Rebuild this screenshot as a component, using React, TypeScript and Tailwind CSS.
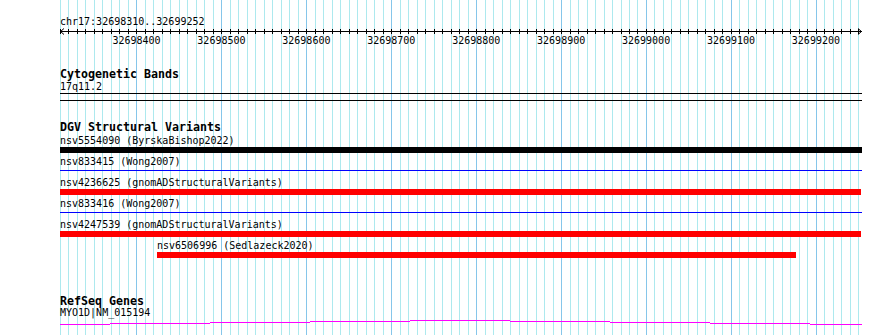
import React from 'react';

const START = 32698310;
const END = 32699252;
const LEFT = 60;
const SPAN = 800;
const toX = (p: number) => LEFT + ((p - START) * SPAN) / (END - START);

const minor = Array.from({ length: 95 }, (_, i) => START + i * 10);
const major = minor.filter((p) => p % 100 === 0);

type Feature = {
  id: string;
  source: string;
  start: number;
  end: number;
  kind: 'black' | 'red' | 'blue';
};

const variants: Feature[] = [
  { id: 'nsv5554090', source: 'ByrskaBishop2022', start: 60, end: 862, kind: 'black' },
  { id: 'nsv833415', source: 'Wong2007', start: 60, end: 862, kind: 'blue' },
  { id: 'nsv4236625', source: 'gnomADStructuralVariants', start: 60, end: 861, kind: 'red' },
  { id: 'nsv833416', source: 'Wong2007', start: 60, end: 862, kind: 'blue' },
  { id: 'nsv4247539', source: 'gnomADStructuralVariants', start: 60, end: 861, kind: 'red' },
  { id: 'nsv6506996', source: 'Sedlazeck2020', start: 157, end: 796, kind: 'red' },
];

// gene connector steps (global x, global y)
const geneSteps: [number, number, number][] = [
  [60, 110, 324],
  [110, 210, 323],
  [210, 310, 322],
  [310, 410, 321],
  [410, 510, 320],
  [510, 610, 321],
  [610, 710, 322],
  [710, 810, 323],
  [810, 862, 324],
];

function Grid() {
  return (
    <svg className="absolute inset-0" width={890} height={335} shapeRendering="crispEdges">
      {minor.map((p) => {
        const x = Math.round(toX(p)) + 0.5;
        const isMajor = p % 100 === 0;
        return (
          <line
            key={p}
            x1={x}
            x2={x}
            y1={0}
            y2={335}
            stroke={isMajor ? '#86c6ea' : '#ade9ee'}
            strokeWidth={1}
          />
        );
      })}
    </svg>
  );
}

function Ruler() {
  return (
    <svg width={804} height={8} shapeRendering="crispEdges" className="block">
      <line x1={0} x2={802} y1={4.5} y2={4.5} stroke="#000" />
      {minor.map((p) => {
        const x = Math.round(toX(p)) - LEFT + 0.5;
        return <line key={p} x1={x} x2={x} y1={2} y2={7} stroke="#000" />;
      })}
      <polyline points="4,1.5 0.5,4.5 4,7.5" fill="none" stroke="#000" shapeRendering="auto" />
      <polyline points="798,1.5 801.5,4.5 798,7.5" fill="none" stroke="#000" shapeRendering="auto" />
    </svg>
  );
}

function TrackTitle({ children }: { children: React.ReactNode }) {
  return <div className="h-[12px] text-[11.63px] leading-[12px] font-bold whitespace-nowrap">{children}</div>;
}

function VariantRow({ f }: { f: Feature }) {
  const offset = f.start - LEFT;
  const width = f.end - f.start;
  return (
    <div className="flex flex-col pb-[3px]">
      <div className="h-[11px] text-[10px] leading-[11px] whitespace-nowrap" style={{ marginLeft: offset }}>
        {f.id} ({f.source})
      </div>
      <div className="mt-[1px] h-[6px] relative" style={{ marginLeft: offset, width }}>
        {f.kind === 'blue' ? (
          <div className="mt-[2px] h-px bg-[#0000ff]" />
        ) : (
          <div className={f.kind === 'red' ? 'h-[6px] bg-[#ff0000]' : 'h-[6px] bg-black'} />
        )}
      </div>
    </div>
  );
}

export default function App() {
  return (
    <div className="relative w-[890px] h-[335px] overflow-hidden bg-white text-black font-['DejaVu_Sans_Mono',monospace]">
      <Grid />

      <div className="relative flex flex-col pl-[60px]">
        {/* Ruler */}
        <div className="pt-[16px] h-[27px] text-[10px] leading-[11px] whitespace-nowrap">chr17:32698310..32699252</div>
        <Ruler />
        <div className="relative h-[11px] text-[10px] leading-[11px]">
          {major.map((p) => (
            <span
              key={p}
              className="absolute top-0 w-[48px] text-center"
              style={{ left: toX(p) - LEFT - 24 }}
            >
              {p}
            </span>
          ))}
        </div>

        {/* Cytogenetic Bands */}
        <div className="mt-[22px]">
          <TrackTitle>Cytogenetic Bands</TrackTitle>
        </div>
        <div className="mt-[1px] h-[11px] text-[10px] leading-[11px]">17q11.2</div>
        <div className="mt-[1px] w-[802px] h-px bg-black" />
        <div className="mt-[6px] w-[802px] h-px bg-black" />

        {/* DGV Structural Variants */}
        <div className="mt-[20px]">
          <TrackTitle>DGV Structural Variants</TrackTitle>
        </div>
        <div className="mt-[2px] flex flex-col">
          {variants.map((f) => (
            <VariantRow key={f.id} f={f} />
          ))}
        </div>

        {/* RefSeq Genes */}
        <div className="mt-[34px]">
          <TrackTitle>RefSeq Genes</TrackTitle>
        </div>
        <div className="h-[11px] text-[10px] leading-[11px]">MYO1D|NM_015194</div>
        <svg width={804} height={8} shapeRendering="crispEdges" className="block">
          {geneSteps.map(([x1, x2, y], i) => (
            <line key={i} x1={x1 - LEFT} x2={x2 - LEFT} y1={y - 318 + 0.5} y2={y - 318 + 0.5} stroke="#ff00ff" />
          ))}
        </svg>
      </div>
    </div>
  );
}
